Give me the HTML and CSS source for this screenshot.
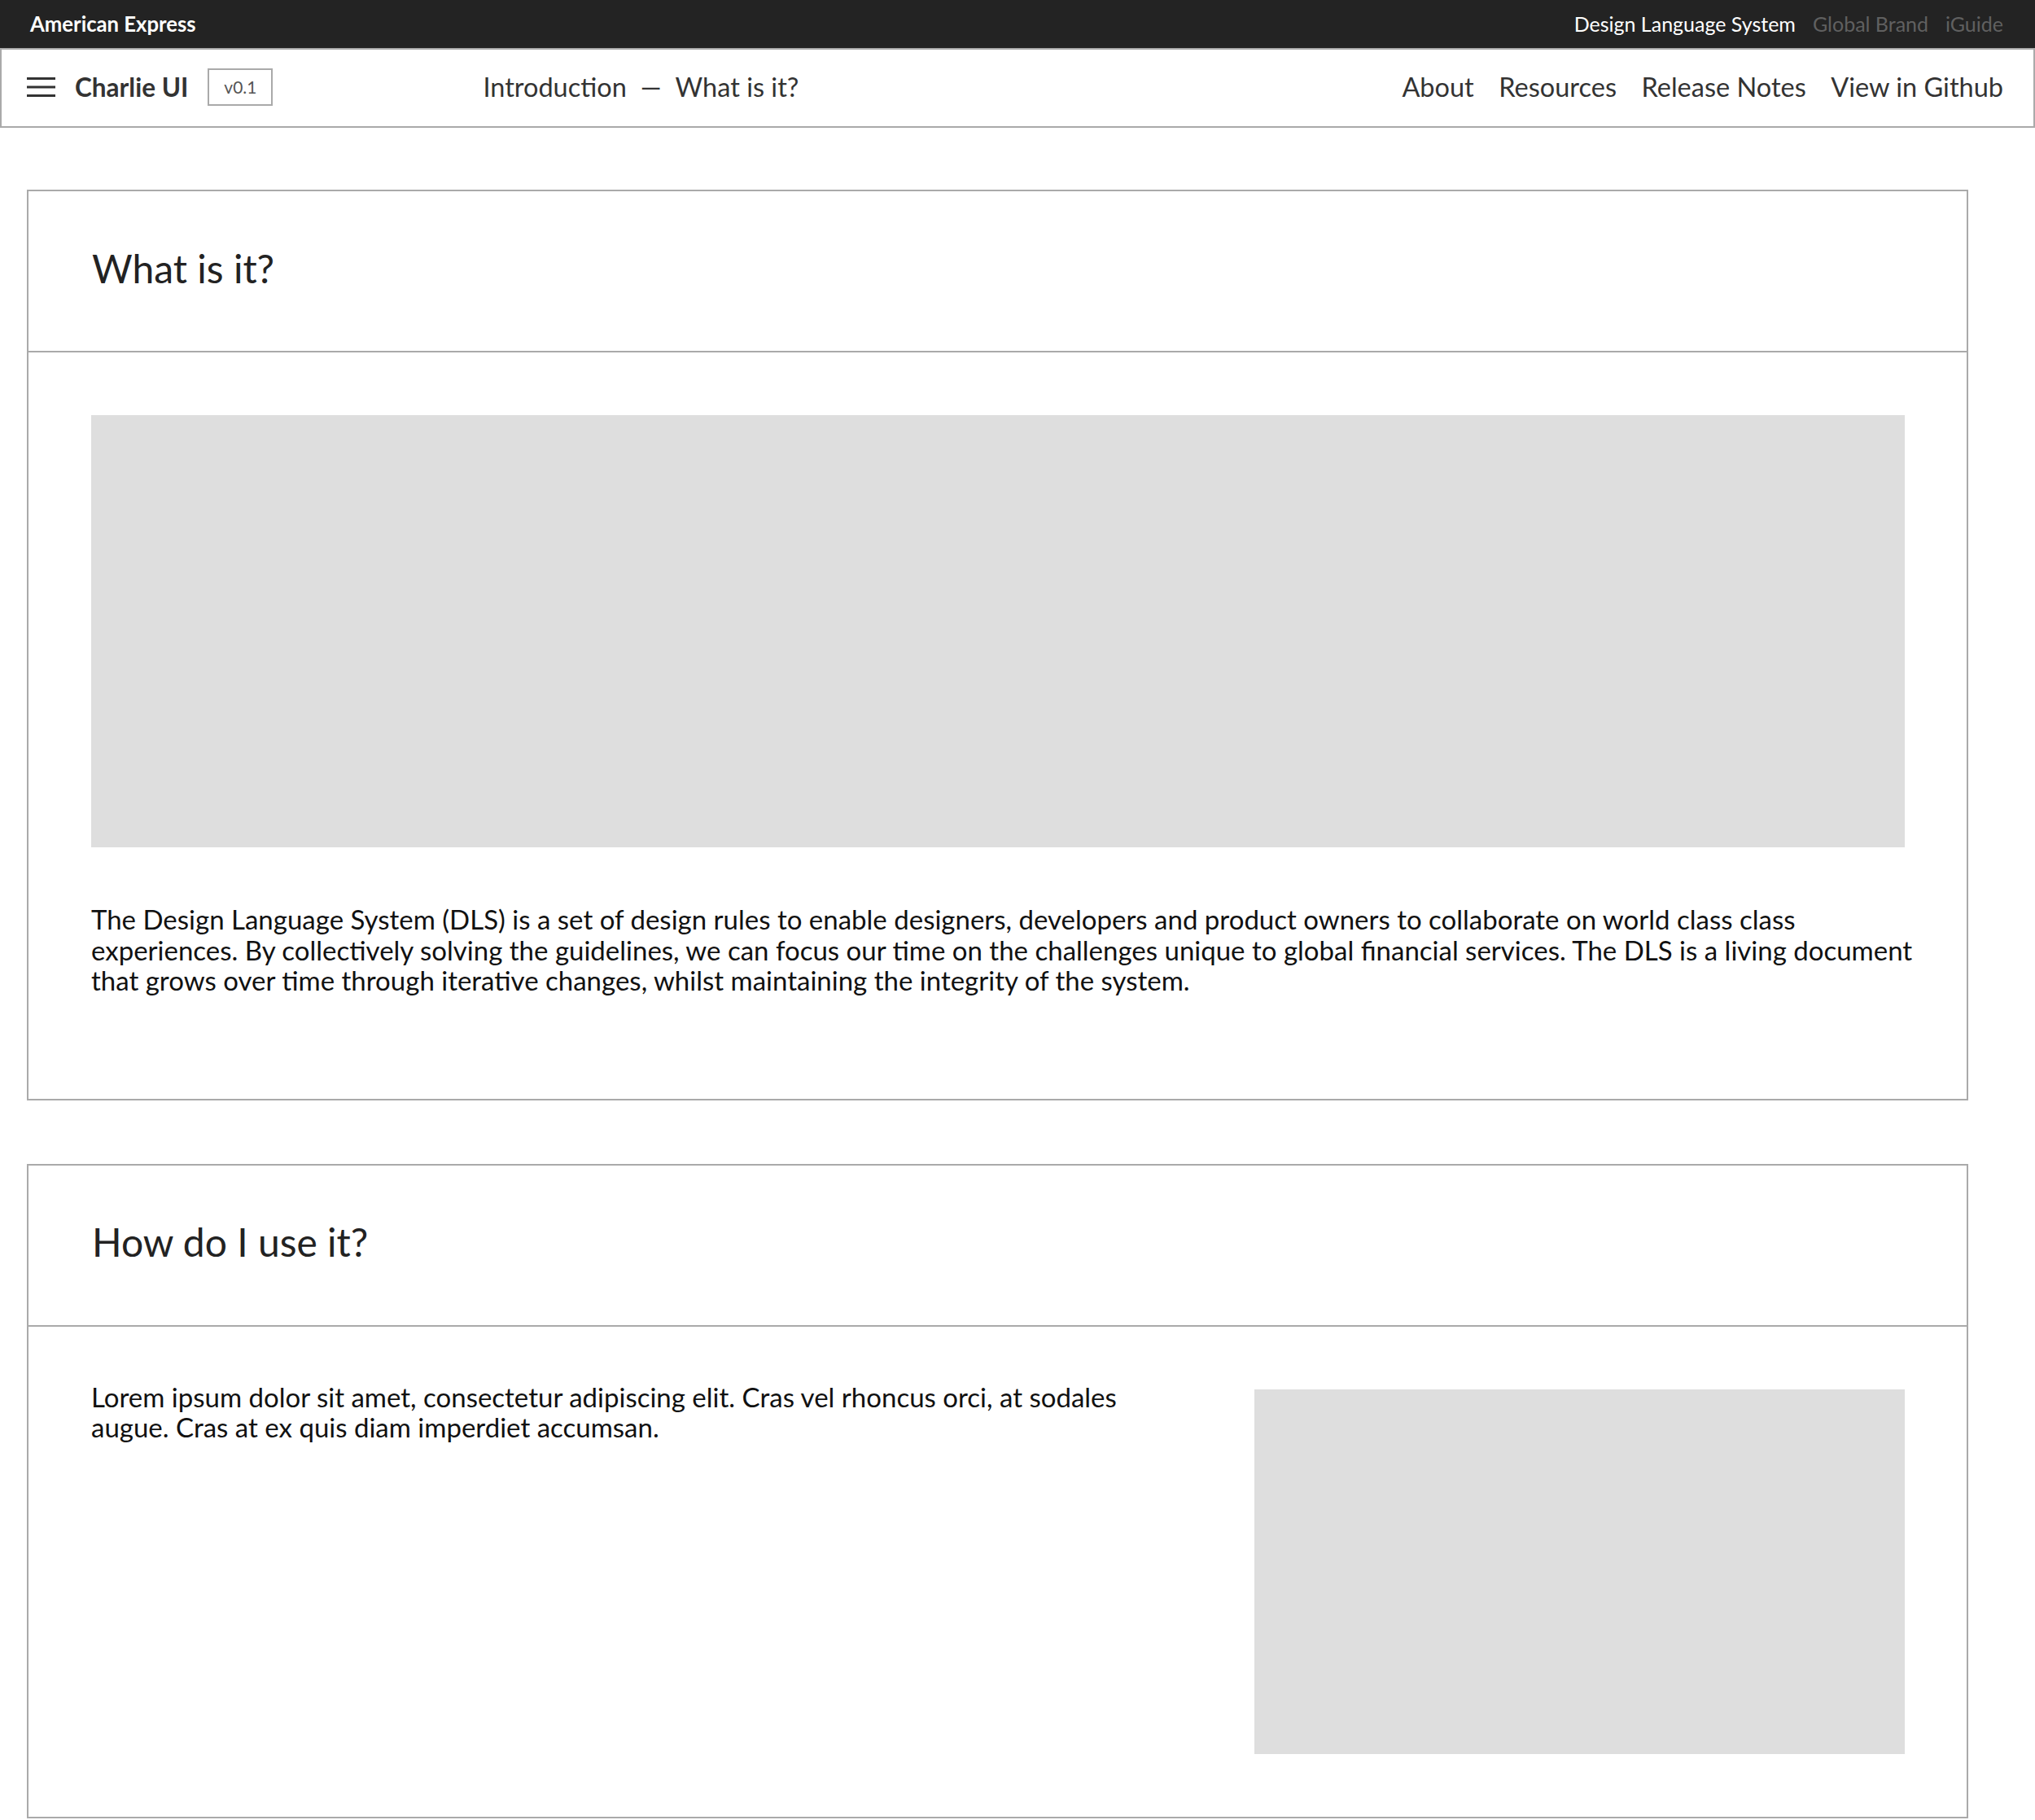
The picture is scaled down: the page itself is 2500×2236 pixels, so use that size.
FILE: index.html
```html
<!DOCTYPE html>
<html lang="en">
<head>
<meta charset="utf-8">
<title>Charlie UI — What is it?</title>
<link rel="stylesheet" href="styles.css">
</head>
<body>
<div class="topbar">
  <span class="brand">American Express</span>
  <nav class="toplinks">
    <a class="toplink active" href="#">Design Language System</a>
    <a class="toplink" href="#">Global Brand</a>
    <a class="toplink" href="#">iGuide</a>
  </nav>
</div>
<header class="header">
  <div class="header-left">
    <svg class="burger" width="35" height="24" viewBox="0 0 35 24" aria-hidden="true">
      <rect x="0" y="0" width="35" height="3" fill="#333"/>
      <rect x="0" y="10.5" width="35" height="3" fill="#333"/>
      <rect x="0" y="21" width="35" height="3" fill="#333"/>
    </svg>
    <span class="product">Charlie UI</span>
    <span class="version">v0.1</span>
  </div>
  <div class="crumbs">
    <span>Introduction</span>
    <span class="dash">—</span>
    <span>What is it?</span>
  </div>
  <nav class="mainnav">
    <a href="#">About</a>
    <a href="#">Resources</a>
    <a href="#">Release Notes</a>
    <a href="#">View in Github</a>
  </nav>
</header>
<main class="main">
  <section class="card">
    <div class="card-head"><h1 class="card-title">What is it?</h1></div>
    <div class="card-body">
      <div class="placeholder hero"></div>
      <p class="text intro">The Design Language System (DLS) is a set of design rules to enable designers, developers and product owners to collaborate on world class class experiences. By collectively solving the guidelines, we can focus our time on the challenges unique to global financial services. The DLS is a living document that grows over time through iterative changes, whilst maintaining the integrity of the system.</p>
    </div>
  </section>
  <section class="card">
    <div class="card-head"><h2 class="card-title">How do I use it?</h2></div>
    <div class="card-body split">
      <p class="text side">Lorem ipsum dolor sit amet, consectetur adipiscing elit. Cras vel rhoncus orci, at sodales augue. Cras at ex quis diam imperdiet accumsan.</p>
      <div class="placeholder side-img"></div>
    </div>
  </section>
</main>
</body>
</html>
```
FILE: styles.css
```css
* { box-sizing: border-box; }
html, body { margin: 0; padding: 0; background: #fff; }
body { font-family: "Lato", "Liberation Sans", sans-serif; color: #111; }
a { text-decoration: none; color: inherit; }

.topbar {
  height: 59px;
  background: #232323;
  display: flex;
  align-items: center;
  justify-content: space-between;
  padding: 0 39px 2px 37px;
}
.brand { color: #fff; font-weight: 700; font-size: 25.7px; }
.toplinks { display: flex; gap: 21px; }
.toplink { font-size: 25px; color: #606060; }
.toplink.active { color: #fff; }

.header {
  height: 98px;
  border: 2px solid #aaa;
  display: flex;
  align-items: center;
  padding: 0 37px 3px 31px;
}
.header-left { display: flex; align-items: center; }
.burger { display: block; margin-right: 24px; }
.product { font-weight: 700; font-size: 31.5px; color: #333; }
.version {
  margin-left: 24px;
  width: 80px;
  height: 46px;
  border: 2px solid #aaa;
  display: flex;
  align-items: center;
  justify-content: center;
  font-size: 21px;
  color: #555;
}
.crumbs { margin-left: 258px; font-size: 32.5px; color: #333; display: flex; align-items: center; }
.dash { margin: 0 17px; }
.mainnav { margin-left: auto; display: flex; gap: 30.5px; font-size: 32.5px; color: #333; }

.main { padding: 76px 82px 2px 33px; display: flex; flex-direction: column; gap: 78px; }
.card { border: 2px solid #aaa; }
.card-head {
  height: 198px;
  border-bottom: 2px solid #aaa;
  display: flex;
  align-items: center;
  padding: 0 78px 8px;
}
.card-title { margin: 0; font-size: 48px; font-weight: 400; color: #222; }
.card-body { padding: 77px 76px 126px 77px; }
.placeholder { background: #dedede; }
.hero { height: 531px; }
.text { margin: 0; font-size: 33px; line-height: 37.5px; color: #111; }
.intro { margin-top: 70px; margin-right: -40px; }

.split {
  display: grid;
  grid-template-columns: 1fr 799px;
  column-gap: 120px;
  align-items: start;
  padding-bottom: 77px;
}
.side { margin-top: -9px; }
.side-img { height: 448px; }
```
